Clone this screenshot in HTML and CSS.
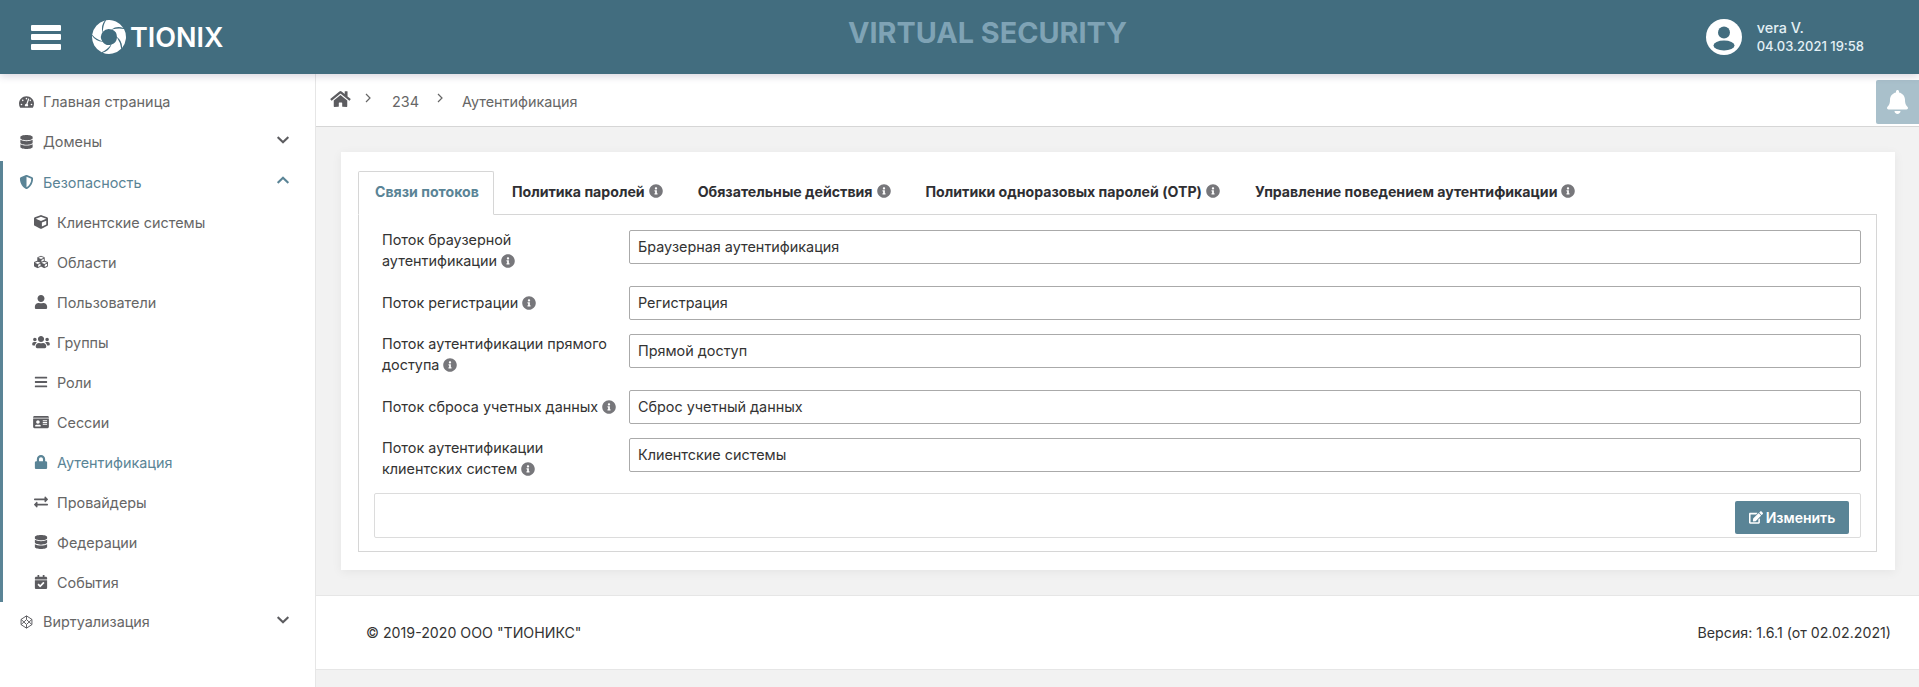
FILE: index.html
```html
<!DOCTYPE html>
<html lang="ru">
<head>
<meta charset="utf-8">
<title>Virtual Security</title>
<link rel="stylesheet" href="styles.css">
</head>
<body>
<svg class="defs" aria-hidden="true">
  <symbol id="i-info" viewBox="0 0 512 512"><path d="M256 8C119.043 8 8 119.083 8 256c0 136.997 111.043 248 248 248s248-111.003 248-248C504 119.083 392.957 8 256 8zm0 110c23.196 0 42 18.804 42 42s-18.804 42-42 42-42-18.804-42-42 18.804-42 42-42zm56 254c0 6.627-5.373 12-12 12h-88c-6.627 0-12-5.373-12-12v-24c0-6.627 5.373-12 12-12h12v-64h-12c-6.627 0-12-5.373-12-12v-24c0-6.627 5.373-12 12-12h64c6.627 0 12 5.373 12 12v100h12c6.627 0 12 5.373 12 12v24z"/></symbol>
  <symbol id="i-db" viewBox="0 0 448 512"><path d="M448 73.143v45.714C448 159.143 347.667 192 224 192S0 159.143 0 118.857V73.143C0 32.857 100.333 0 224 0s224 32.857 224 73.143zM448 176v102.857C448 319.143 347.667 352 224 352S0 319.143 0 278.857V176c48.125 33.143 136.208 48.572 224 48.572S399.874 209.143 448 176zm0 160v102.857C448 479.143 347.667 512 224 512S0 479.143 0 438.857V336c48.125 33.143 136.208 48.572 224 48.572S399.874 369.143 448 336z"/></symbol>
  <symbol id="i-down" viewBox="0 0 448 512"><path d="M207.029 381.476L12.686 187.132c-9.373-9.373-9.373-24.569 0-33.941l22.667-22.667c9.357-9.357 24.522-9.375 33.901-.04L224 284.505l154.745-154.021c9.379-9.335 24.544-9.317 33.901.04l22.667 22.667c9.373 9.373 9.373 24.569 0 33.941L240.971 381.476c-9.373 9.372-24.569 9.372-33.942 0z"/></symbol>
</svg>

<header class="topbar">
  <button class="burger" type="button" aria-label="Меню"><span></span><span></span><span></span></button>
  <div class="logo">
    <svg class="logo-mark" viewBox="-17 -17 34 34">
      <g fill="#fff">
        <path d="M-2.950 -16.740A17 17 0 0 1 14.400 -9Q8 -11.500 2.470 -7.600A8 8 0 0 0 -6.130 -5.140Q-6 -12 -2.950 -16.740Z"/>
        <path d="M-2.950 -16.740A17 17 0 0 1 14.400 -9Q8 -11.500 2.470 -7.600A8 8 0 0 0 -6.130 -5.140Q-6 -12 -2.950 -16.740Z" transform="rotate(72)"/>
        <path d="M-2.950 -16.740A17 17 0 0 1 14.400 -9Q8 -11.500 2.470 -7.600A8 8 0 0 0 -6.130 -5.140Q-6 -12 -2.950 -16.740Z" transform="rotate(144)"/>
        <path d="M-2.950 -16.740A17 17 0 0 1 14.400 -9Q8 -11.500 2.470 -7.600A8 8 0 0 0 -6.130 -5.140Q-6 -12 -2.950 -16.740Z" transform="rotate(216)"/>
        <path d="M-2.950 -16.740A17 17 0 0 1 14.400 -9Q8 -11.500 2.470 -7.600A8 8 0 0 0 -6.130 -5.140Q-6 -12 -2.950 -16.740Z" transform="rotate(288)"/>
      </g>
    </svg>
    <span class="logo-text">TIONIX</span>
  </div>
  <h1 class="app-title">VIRTUAL SECURITY</h1>
  <div class="account">
    <svg class="avatar" viewBox="0 0 36 36">
      <circle cx="18" cy="18" r="18" fill="#fff"/>
      <circle cx="18" cy="13.500" r="6" fill="#426d7f"/>
      <ellipse cx="18" cy="26.500" rx="10.500" ry="5" fill="#426d7f"/>
    </svg>
    <div class="account-text">
      <div class="account-name">vera V.</div>
      <div class="account-date">04.03.2021 19:58</div>
    </div>
  </div>
</header>

<div class="shell">
  <nav class="sidebar">
    <a class="nav-item"><svg class="ic ic-top" viewBox="0 0 576 512"><path d="M288 32C128.94 32 0 160.94 0 320c0 52.8 14.25 102.26 39.06 144.8 5.61 9.62 16.3 15.2 27.44 15.2h443c11.14 0 21.83-5.58 27.44-15.2C561.75 422.26 576 372.8 576 320c0-159.06-128.94-288-288-288zm0 64c14.71 0 26.58 10.13 30.32 23.65-1.11 2.26-2.64 4.23-3.45 6.67l-9.22 27.67c-5.13 3.49-10.97 6.01-17.64 6.01-17.67 0-32-14.33-32-32S270.33 96 288 96zM96 384c-17.67 0-32-14.33-32-32s14.33-32 32-32 32 14.33 32 32-14.33 32-32 32zm48-160c-17.67 0-32-14.33-32-32s14.33-32 32-32 32 14.33 32 32-14.33 32-32 32zm246.77-72.41l-61.33 184C343.13 347.33 352 364.54 352 384c0 11.72-3.38 22.55-8.88 32H232.88c-5.5-9.45-8.88-20.28-8.88-32 0-33.94 26.5-61.43 59.9-63.59l61.34-184.01c4.17-12.56 17.73-19.45 30.36-15.17 12.57 4.19 19.35 17.79 15.17 30.36zm14.66 57.2l15.52-46.55c3.47-1.29 7.13-2.23 11.05-2.23 17.67 0 32 14.33 32 32s-14.33 32-32 32c-11.38-.01-20.89-6.28-26.57-15.22zM480 384c-17.67 0-32-14.33-32-32s14.33-32 32-32 32 14.33 32 32-14.33 32-32 32z"/></svg>Главная страница</a>
    <a class="nav-item"><svg class="ic ic-top"><use href="#i-db"/></svg>Домены<svg class="chev"><use href="#i-down"/></svg></a>
    <div class="nav-group">
      <a class="nav-item is-active"><svg class="ic ic-top" viewBox="0 0 512 512"><path d="M466.5 83.7l-192-80a48.15 48.15 0 0 0-36.9 0l-192 80C27.7 91.1 16 108.6 16 128c0 198.5 114.5 335.7 221.5 380.3 11.8 4.9 25.1 4.9 36.9 0C360.1 472.6 496 349.3 496 128c0-19.4-11.7-36.9-29.5-44.3zM256.1 446.3l-.1-381 175.9 73.3c-3.3 151.4-82.1 261.1-175.8 307.7z"/></svg>Безопасность<svg class="chev chev-up"><use href="#i-down"/></svg></a>
      <a class="nav-item nav-sub"><svg class="ic" viewBox="0 0 512 512"><path d="M239.1 6.3l-208 78c-18.7 7-31.1 25-31.1 45v225.1c0 18.2 10.3 34.8 26.5 42.9l208 104c13.5 6.8 29.4 6.8 42.9 0l208-104c16.3-8.1 26.5-24.8 26.5-42.9V129.3c0-20-12.4-37.9-31.1-44.9l-208-78C262 2.2 250 2.2 239.1 6.3zM256 68.4l192 72v1.1l-192 78-192-78v-1.1l192-72zm32 356V275.5l160-65v133.9l-160 80z"/></svg>Клиентские системы</a>
      <a class="nav-item nav-sub"><svg class="ic" viewBox="0 0 512 512"><path d="M488.6 250.2L392 214V105.5c0-15-9.3-28.4-23.4-33.7l-100-37.5c-8.1-3.1-17.1-3.1-25.3 0l-100 37.5c-14.1 5.3-23.4 18.7-23.4 33.7V214l-96.6 36.2C9.3 255.5 0 268.9 0 283.9V394c0 13.6 7.7 26.1 19.9 32.2l100 50c10.1 5.1 22.1 5.1 32.2 0l103.9-52 103.9 52c10.1 5.1 22.1 5.1 32.2 0l100-50c12.2-6.1 19.9-18.6 19.9-32.2V283.9c0-15-9.3-28.4-23.4-33.7zM358 214.8l-85 31.9v-68.2l85-37v73.3zM154 104.1l102-38.2 102 38.2v.6l-102 41.4-102-41.4v-.6zm84 291.1l-85 42.5v-79.1l85-38.8v75.4zm0-112l-102 41.4-102-41.4v-.6l102-38.2 102 38.2v.6zm240 112l-85 42.5v-79.1l85-38.8v75.4zm0-112l-102 41.4-102-41.4v-.6l102-38.2 102 38.2v.6z"/></svg>Области</a>
      <a class="nav-item nav-sub"><svg class="ic" viewBox="0 0 448 512"><path d="M224 256c70.7 0 128-57.3 128-128S294.7 0 224 0 96 57.3 96 128s57.3 128 128 128zm89.6 32h-16.7c-22.2 10.2-46.9 16-72.9 16s-50.6-5.8-72.9-16h-16.7C60.2 288 0 348.2 0 422.4V464c0 26.5 21.5 48 48 48h352c26.5 0 48-21.5 48-48v-41.6c0-74.2-60.2-134.4-134.4-134.4z"/></svg>Пользователи</a>
      <a class="nav-item nav-sub"><svg class="ic ic-users" viewBox="0 0 640 512"><path d="M96 224c35.3 0 64-28.7 64-64s-28.7-64-64-64-64 28.7-64 64 28.7 64 64 64zm448 0c35.3 0 64-28.7 64-64s-28.7-64-64-64-64 28.7-64 64 28.7 64 64 64zm32 32h-64c-17.6 0-33.5 7.1-45.1 18.6 40.3 22.1 68.9 62 75.1 109.4h66c17.7 0 32-14.3 32-32v-32c0-35.3-28.7-64-64-64zm-256 0c61.9 0 112-50.1 112-112S381.9 32 320 32 208 82.1 208 144s50.1 112 112 112zm76.8 32h-8.3c-20.8 10-43.9 16-68.5 16s-47.6-6-68.5-16h-8.3C179.6 288 128 339.6 128 403.2V432c0 26.5 21.5 48 48 48h288c26.5 0 48-21.5 48-48v-28.8c0-63.6-51.6-115.2-115.2-115.2zm-223.7-13.4C161.5 263.1 145.6 256 128 256H64c-35.3 0-64 28.7-64 64v32c0 17.7 14.3 32 32 32h65.9c6.3-47.4 34.9-87.3 75.2-109.4z"/></svg>Группы</a>
      <a class="nav-item nav-sub"><svg class="ic" viewBox="0 0 448 512"><path d="M16 132h416c8.837 0 16-7.163 16-16V76c0-8.837-7.163-16-16-16H16C7.163 60 0 67.163 0 76v40c0 8.837 7.163 16 16 16zm0 160h416c8.837 0 16-7.163 16-16v-40c0-8.837-7.163-16-16-16H16c-8.837 0-16 7.163-16 16v40c0 8.837 7.163 16 16 16zm0 160h416c8.837 0 16-7.163 16-16v-40c0-8.837-7.163-16-16-16H16c-8.837 0-16 7.163-16 16v40c0 8.837 7.163 16 16 16z"/></svg>Роли</a>
      <a class="nav-item nav-sub"><svg class="ic ic-wide" viewBox="0 0 576 512"><path d="M528 32H48C21.5 32 0 53.5 0 80v16h576V80c0-26.5-21.5-48-48-48zM0 432c0 26.5 21.5 48 48 48h480c26.5 0 48-21.5 48-48V128H0v304zm352-232c0-4.4 3.6-8 8-8h144c4.4 0 8 3.6 8 8v16c0 4.4-3.6 8-8 8H360c-4.4 0-8-3.6-8-8v-16zm0 64c0-4.4 3.6-8 8-8h144c4.4 0 8 3.6 8 8v16c0 4.4-3.6 8-8 8H360c-4.4 0-8-3.6-8-8v-16zm0 64c0-4.4 3.6-8 8-8h144c4.4 0 8 3.6 8 8v16c0 4.4-3.6 8-8 8H360c-4.4 0-8-3.6-8-8v-16zM176 192c35.3 0 64 28.7 64 64s-28.7 64-64 64-64-28.7-64-64 28.7-64 64-64zM67.1 396.2C75.5 370.5 99.6 352 128 352h8.2c12.3 5.1 25.7 8 39.8 8s27.6-2.9 39.8-8h8.2c28.4 0 52.5 18.5 60.9 44.2 3.2 9.9-5.2 19.8-15.6 19.8H82.7c-10.4 0-18.8-10-15.6-19.8z"/></svg>Сессии</a>
      <a class="nav-item nav-sub is-active"><svg class="ic" viewBox="0 0 448 512"><path d="M400 224h-24v-72C376 68.2 307.8 0 224 0S72 68.2 72 152v72H48c-26.5 0-48 21.5-48 48v192c0 26.5 21.5 48 48 48h352c26.5 0 48-21.5 48-48V272c0-26.5-21.5-48-48-48zm-104 0H152v-72c0-39.7 32.3-72 72-72s72 32.3 72 72v72z"/></svg>Аутентификация</a>
      <a class="nav-item nav-sub"><svg class="ic" viewBox="0 0 512 512"><path d="M0 168v-16c0-13.255 10.745-24 24-24h360V80c0-21.367 25.899-32.042 40.971-16.971l80 80c9.372 9.373 9.372 24.569 0 33.941l-80 80C409.956 271.982 384 261.456 384 240v-48H24c-13.255 0-24-10.745-24-24zm488 152H128v-48c0-21.314-25.862-32.08-40.971-16.971l-80 80c-9.372 9.373-9.372 24.569 0 33.941l80 80C102.057 463.997 128 453.437 128 432v-48h360c13.255 0 24-10.745 24-24v-16c0-13.255-10.745-24-24-24z"/></svg>Провайдеры</a>
      <a class="nav-item nav-sub"><svg class="ic"><use href="#i-db"/></svg>Федерации</a>
      <a class="nav-item nav-sub"><svg class="ic" viewBox="0 0 448 512"><path d="M436 160H12c-6.627 0-12-5.373-12-12v-36c0-26.51 21.49-48 48-48h48V12c0-6.627 5.373-12 12-12h40c6.627 0 12 5.373 12 12v52h128V12c0-6.627 5.373-12 12-12h40c6.627 0 12 5.373 12 12v52h48c26.51 0 48 21.49 48 48v36c0 6.627-5.373 12-12 12zM12 192h424c6.627 0 12 5.373 12 12v260c0 26.51-21.49 48-48 48H48c-26.51 0-48-21.49-48-48V204c0-6.627 5.373-12 12-12zm333.296 95.947l-28.169-28.398c-4.667-4.705-12.265-4.736-16.97-.068L194.12 364.665l-45.98-46.352c-4.667-4.705-12.266-4.736-16.971-.068l-28.397 28.17c-4.705 4.667-4.736 12.265-.068 16.97l82.601 83.269c4.667 4.705 12.265 4.736 16.97.068l142.953-141.805c4.705-4.667 4.736-12.265.068-16.97z"/></svg>События</a>
    </div>
    <a class="nav-item"><svg class="ic ic-top ic-line" viewBox="0 0 16 16"><path d="M8 1l6.200 4v6L8 15l-6.200-4V5zM8 1v4.200M8 10.800V15M1.800 5L8 10.800 14.200 5M1.800 11L8 5.200 14.200 11"/></svg>Виртуализация<svg class="chev"><use href="#i-down"/></svg></a>
  </nav>

  <div class="main">
    <div class="crumbs">
      <svg class="crumb-home" viewBox="0 0 576 512"><path d="M280.37 148.26L96 300.11V464a16 16 0 0 0 16 16l112.06-.29a16 16 0 0 0 15.92-16V368a16 16 0 0 1 16-16h64a16 16 0 0 1 16 16v95.64a16 16 0 0 0 16 16.05L464 480a16 16 0 0 0 16-16V300L295.67 148.26a12.19 12.19 0 0 0-15.3 0zM571.6 251.47L488 182.56V44.05a12 12 0 0 0-12-12h-56a12 12 0 0 0-12 12v72.61L318.47 43a48 48 0 0 0-61 0L4.34 251.47a12 12 0 0 0-1.6 16.9l25.5 31A12 12 0 0 0 45.15 301l235.22-193.74a12.19 12.19 0 0 1 15.3 0L530.9 301a12 12 0 0 0 16.9-1.6l25.5-31a12 12 0 0 0-1.7-16.93z"/></svg>
      <svg class="crumb-sep" viewBox="0 0 6 10"><path d="M1 1l4 4-4 4"/></svg>
      <span>234</span>
      <svg class="crumb-sep" viewBox="0 0 6 10"><path d="M1 1l4 4-4 4"/></svg>
      <span>Аутентификация</span>
      <button class="bell" type="button" aria-label="Уведомления"><svg viewBox="0 0 448 512"><path d="M224 512c35.32 0 63.97-28.65 63.97-64H160.03c0 35.35 28.65 64 63.97 64zm215.39-149.71c-19.32-20.76-55.47-51.99-55.47-154.29 0-77.7-54.48-139.9-127.94-155.16V32c0-17.67-14.32-32-31.98-32s-31.98 14.33-31.98 32v20.84C118.56 68.1 64.08 130.3 64.08 208c0 102.3-36.15 133.53-55.47 154.29-6 6.45-8.66 14.16-8.61 21.71.11 16.4 12.98 32 32.1 32h383.8c19.12 0 32-15.6 32.1-32 .05-7.55-2.61-15.27-8.61-21.71z"/></svg></button>
    </div>

    <section class="card">
      <div class="tabs">
        <a class="tab is-active">Связи потоков</a>
        <a class="tab">Политика паролей<svg class="info"><use href="#i-info"/></svg></a>
        <a class="tab">Обязательные действия<svg class="info"><use href="#i-info"/></svg></a>
        <a class="tab">Политики одноразовых паролей (OTP)<svg class="info"><use href="#i-info"/></svg></a>
        <a class="tab">Управление поведением аутентификации<svg class="info"><use href="#i-info"/></svg></a>
      </div>
      <div class="tab-body">
        <div class="field">
          <label class="field-label">Поток браузерной аутентификации<svg class="info"><use href="#i-info"/></svg></label>
          <input class="field-input" type="text" value="Браузерная аутентификация">
        </div>
        <div class="field">
          <label class="field-label field-label-one">Поток регистрации<svg class="info"><use href="#i-info"/></svg></label>
          <input class="field-input" type="text" value="Регистрация">
        </div>
        <div class="field">
          <label class="field-label">Поток аутентификации прямого доступа<svg class="info"><use href="#i-info"/></svg></label>
          <input class="field-input" type="text" value="Прямой доступ">
        </div>
        <div class="field">
          <label class="field-label field-label-one">Поток сброса учетных данных<svg class="info"><use href="#i-info"/></svg></label>
          <input class="field-input" type="text" value="Сброс учетный данных">
        </div>
        <div class="field">
          <label class="field-label">Поток аутентификации клиентских систем<svg class="info"><use href="#i-info"/></svg></label>
          <input class="field-input" type="text" value="Клиентские системы">
        </div>
        <div class="actions">
          <button class="btn" type="button"><svg viewBox="0 0 576 512"><path d="M402.6 83.2l90.2 90.2c3.8 3.8 3.8 10 0 13.8L274.4 405.6l-92.8 10.3c-12.4 1.4-22.9-9.1-21.5-21.5l10.3-92.8L388.8 83.2c3.8-3.8 10-3.8 13.8 0zm162-22.9l-48.8-48.8c-15.2-15.2-39.9-15.2-55.2 0l-35.4 35.4c-3.8 3.8-3.8 10 0 13.8l90.2 90.2c3.8 3.8 10 3.8 13.8 0l35.4-35.4c15.2-15.3 15.2-40 0-55.2zM384 346.2V448H64V128h229.8c3.2 0 6.2-1.3 8.5-3.5l40-40c7.6-7.6 2.2-20.5-8.5-20.5H48C21.5 64 0 85.5 0 112v352c0 26.5 21.5 48 48 48h352c26.5 0 48-21.5 48-48V306.2c0-10.7-12.9-16-20.5-8.5l-40 40c-2.2 2.3-3.5 5.3-3.5 8.5z"/></svg>Изменить</button>
        </div>
      </div>
    </section>

    <footer class="footer">
      <span>© 2019-2020 ООО "ТИОНИКС"</span>
      <span>Версия: 1.6.1 (от 02.02.2021)</span>
    </footer>
  </div>
</div>
</body>
</html>
```

FILE: styles.css
```css
* { box-sizing: border-box; }
html, body { margin: 0; height: 687px; overflow: hidden; }
body { font-family: Inter, "Noto Sans", sans-serif; font-size: 14.4px; color: #333; background: #f2f2f2; }
.defs { display: none; }

.topbar { position: relative; z-index: 2; height: 74px; background: #426d7f; display: flex; align-items: center; padding-left: 31px; color: #fff; box-shadow: 0 2px 8px rgba(60, 40, 90, .2); }
.burger { width: 30px; height: 25px; padding: 0; border: 0; background: none; display: flex; flex-direction: column; justify-content: space-between; }
.burger span { display: block; height: 6px; border-radius: 1px; background: #fff; }
.logo { display: flex; align-items: center; margin-left: 31px; }
.logo-mark { width: 34px; height: 34px; }
.logo-text { margin-left: 4px; font-size: 27px; font-weight: 600; line-height: 1; }
.app-title { position: absolute; left: 0; right: 0; top: 15px; margin: 0; padding-left: 56px; text-align: center; font-size: 28.8px; line-height: 36px; font-weight: 700; color: #7fa3b5; }
.account { margin-left: auto; margin-right: 55px; display: flex; align-items: center; }
.avatar { width: 36px; height: 36px; }
.account-text { margin-left: 15px; color: #e3f0f5; }
.account-name { font-size: 14.4px; font-weight: 500; line-height: 19px; }
.account-date { font-size: 13px; font-weight: 500; line-height: 19px; }

.shell { display: flex; height: 613px; }
.sidebar { width: 316px; flex: none; padding-top: 8px; background: #fff; border-right: 1px solid #e6e6e6; }
.nav-group { border-left: 3px solid #5a8496; margin-top: -1px; padding-top: 1px; }
.nav-item { position: relative; height: 40px; display: flex; align-items: center; padding: 0 0 1px 43px; color: #666; white-space: nowrap; }
.nav-group .nav-item { padding: 0 0 0 40px; }
.nav-group .nav-sub { padding-left: 54px; }
.nav-item.is-active { color: #5a8496; }
.ic { position: absolute; left: 35px; top: 13px; width: 14px; height: 14px; fill: #5c5c60; }
.nav-group .nav-sub .ic { left: 31px; }
.nav-group .nav-sub .ic-wide { left: 30px; width: 16px; }
.nav-group .nav-sub .ic-users { left: 29px; width: 18px; }
.ic-top, .nav-group .ic-top { left: 19px; width: 15px; height: 14px; }
.nav-group .ic-top { left: 16px; }
.ic-line { fill: none; stroke: #5c5c60; stroke-width: 1.1; }
.is-active .ic { fill: #5a8496; }
.chev { position: absolute; left: 277px; top: 11px; width: 12px; height: 14px; fill: #5c5c60; }
.nav-group .chev { left: 274px; }
.chev-up { transform: scaleY(-1); fill: #5a8496; }

.main { flex: 1; min-width: 0; }
.crumbs { position: relative; height: 53px; background: #fff; border-bottom: 1px solid #d6d6d6; display: flex; align-items: center; padding-left: 14px; color: #666; }
.crumbs > span { padding-top: 2px; }
.crumb-home { width: 21px; height: 18px; fill: #5c5c60; margin-top: -3px; }
.crumb-sep { width: 6px; height: 10px; margin: -4px 21px 0 14px; fill: none; stroke: #666; stroke-width: 1.2; }
.crumbs span + .crumb-sep { margin-left: 18px; margin-right: 19px; }
.bell { position: absolute; right: 0; top: 6px; width: 43px; height: 44px; padding: 0; border: 0; border-radius: 2px 0 0 2px; background: #a9c0cb; display: flex; align-items: center; justify-content: center; }
.bell svg { width: 21px; height: 24px; fill: #fff; }

.card { margin: 25px 24px 25px 25px; height: 418px; padding: 19px 18px 18px 17px; background: #fff; box-shadow: 0 2px 10px rgba(0, 0, 0, .06); }
.tabs { display: flex; gap: 1px; height: 44px; position: relative; z-index: 1; }
.tab { height: 44px; padding: 0 16px 4px; display: flex; align-items: center; font-size: 14.15px; font-weight: 700; color: #2f2f33; white-space: nowrap; border: 1px solid transparent; }
.tab.is-active { color: #5a8496; border-color: #d6d6d6; border-bottom-color: #fff; border-radius: 2px 2px 0 0; padding-right: 14px; }
.info { width: 14px; height: 14px; fill: #77777b; vertical-align: -2px; margin-left: 4px; flex: none; }
.tab-body { margin-top: -1px; height: 338px; padding: 15px 15px 0; border: 1px solid #d6d6d6; }
.field { display: grid; grid-template-columns: 247px 1fr; margin-bottom: 14px; padding-left: 8px; align-items: start; }
.field-label { line-height: 21px; color: #333; margin: -1px 0 1px; padding-right: 8px; }
.field-label-one { padding-top: 7px; }
.field-input { height: 34px; width: 100%; padding: 0 8px 2px; border: 1px solid #aaa; border-radius: 2px; background: #fff; color: #333; font: 14.4px Inter, sans-serif; outline: none; }
.actions { margin-top: -1px; height: 45px; padding: 7px 11px 0 0; border: 1px solid #dcdcdc; border-radius: 2px; display: flex; justify-content: flex-end; align-items: flex-start; }
.btn { height: 33px; width: 114px; padding: 0; border: 0; border-radius: 2px; background: #5a8496; color: #fff; font: 600 14px Inter, sans-serif; display: flex; align-items: center; justify-content: center; }
.btn svg { width: 14px; height: 13px; margin-right: 3px; fill: #fff; }

.footer { height: 75px; padding: 0 28px 0 50px; display: flex; align-items: center; justify-content: space-between; background: #fff; border-top: 1px solid #e6e6e6; border-bottom: 1px solid #e6e6e6; color: #333; font-size: 14.2px; }
```
